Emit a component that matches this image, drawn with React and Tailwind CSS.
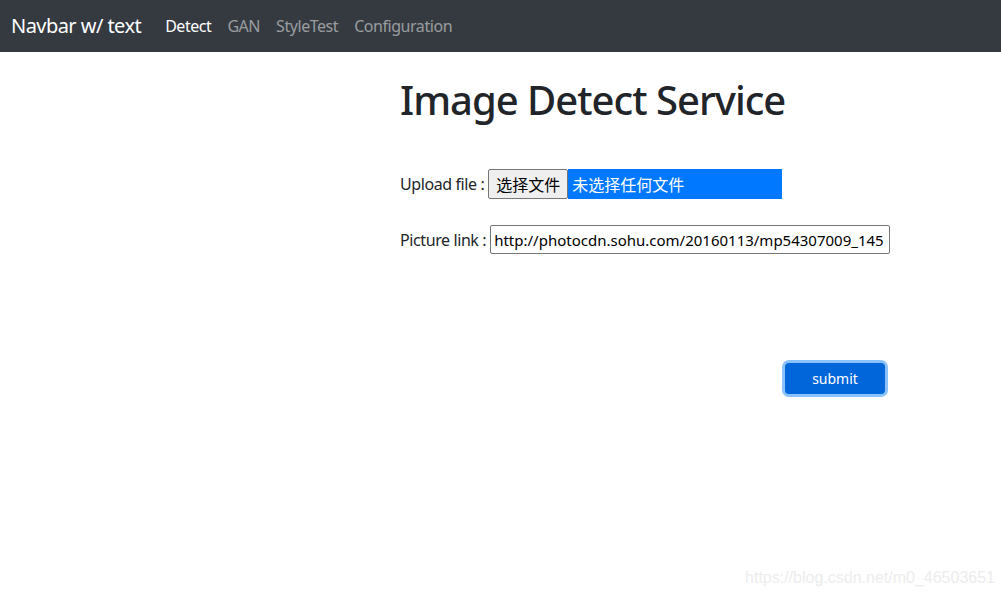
export default function App() {
  const links = [
    { label: "Detect", active: true },
    { label: "GAN" },
    { label: "StyleTest" },
    { label: "Configuration" },
  ];

  return (
    <div
      className="min-h-[598px] bg-white text-[#212529] relative"
      style={{ fontFamily: '"Noto Sans", "Noto Sans CJK SC", sans-serif' }}
    >
      {/* Navbar */}
      <nav className="h-[52px] bg-[#343a40] flex items-center pl-[11px]">
        <span className="text-[20px] tracking-[-0.55px] text-white mr-[24px]">Navbar w/ text</span>
        <ul className="flex items-center gap-[16px] text-[16px] tracking-[-0.45px]">
          {links.map((l) => (
            <li key={l.label} className={l.active ? "text-white" : "text-white/50"}>
              {l.label}
            </li>
          ))}
        </ul>
      </nav>

      {/* Content */}
      <main className="pl-[400px] pt-[24px]">
        <h1 className="text-[40px] leading-[48px] font-medium tracking-[-1px]">Image Detect Service</h1>

        <div className="mt-[45px] flex items-center text-[16px]">
          <span className="mr-[4px] tracking-[-0.4px]">Upload file :</span>
          <div className="flex items-stretch h-[30px] font-['Noto_Sans_CJK_SC',sans-serif]">
            <span className="w-[80px] flex items-center justify-center bg-[#efefef] border border-[#767676] rounded-[2px] text-black text-[16px]">
              选择文件
            </span>
            <span className="w-[214px] bg-[#0078ff] text-white flex items-center pl-[4px] text-[16px]">
              未选择任何文件
            </span>
          </div>
        </div>

        <div className="mt-[26px] flex items-center text-[16px]">
          <span className="mr-[4px] tracking-[-0.4px]">Picture link :</span>
          <input
            readOnly
            value="http://photocdn.sohu.com/20160113/mp54307009_145"
            className="w-[400px] h-[29px] border border-[#767676] rounded-[2px] px-[3px] text-[15px] text-black outline-none"
          />
        </div>

        <div className="mt-[109px] w-[485px] flex justify-end">
          <button className="w-[100px] h-[31px] bg-[#0066d9] text-white text-[14px] rounded-[4px] ring-[3px] ring-[#8cc3ff]">
            submit
          </button>
        </div>
      </main>

      <div
        className="absolute right-[6px] bottom-[8px] text-[16px] text-[#ececec]"
        style={{ fontFamily: '"Liberation Sans", sans-serif' }}
      >
        https://blog.csdn.net/m0_46503651
      </div>
    </div>
  );
}
